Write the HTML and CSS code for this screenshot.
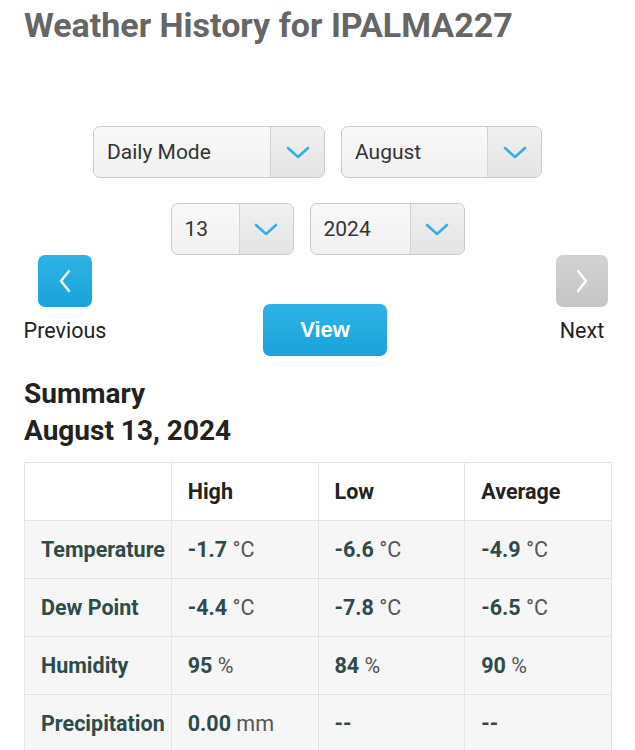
FILE: index.html
```html
<!DOCTYPE html>
<html>
<head>
<meta charset="utf-8">
<link rel="stylesheet" href="styles.css">
</head>
<body>
<h1 class="title">Weather History for IPALMA227</h1>

<div class="selects">
  <div class="sel-row">
    <div class="select">
      <span class="sel-text w-mode">Daily Mode</span>
      <span class="sel-arrow"><svg width="24" height="14" viewBox="0 0 24 14"><polyline points="2,2 12,11 22,2" fill="none" stroke="#3aaee0" stroke-width="2.6" stroke-linecap="round" stroke-linejoin="round"/></svg></span>
    </div>
    <div class="select">
      <span class="sel-text w-month">August</span>
      <span class="sel-arrow"><svg width="24" height="14" viewBox="0 0 24 14"><polyline points="2,2 12,11 22,2" fill="none" stroke="#3aaee0" stroke-width="2.6" stroke-linecap="round" stroke-linejoin="round"/></svg></span>
    </div>
  </div>
  <div class="sel-row">
    <div class="select">
      <span class="sel-text w-day">13</span>
      <span class="sel-arrow"><svg width="24" height="14" viewBox="0 0 24 14"><polyline points="2,2 12,11 22,2" fill="none" stroke="#3aaee0" stroke-width="2.6" stroke-linecap="round" stroke-linejoin="round"/></svg></span>
    </div>
    <div class="select">
      <span class="sel-text w-year">2024</span>
      <span class="sel-arrow"><svg width="24" height="14" viewBox="0 0 24 14"><polyline points="2,2 12,11 22,2" fill="none" stroke="#3aaee0" stroke-width="2.6" stroke-linecap="round" stroke-linejoin="round"/></svg></span>
    </div>
  </div>
</div>

<div class="nav">
  <div class="nav-col prev-col">
    <div class="nav-btn btn-prev"><svg width="12" height="24" viewBox="0 0 12 24"><polyline points="10,2 2,12 10,22" fill="none" stroke="#fff" stroke-width="2.4" stroke-linecap="round" stroke-linejoin="round"/></svg></div>
    <div class="nav-label">Previous</div>
  </div>
  <div class="view-btn">View</div>
  <div class="nav-col next-col">
    <div class="nav-btn btn-next"><svg width="12" height="24" viewBox="0 0 12 24"><polyline points="2,2 10,12 2,22" fill="none" stroke="#fff" stroke-width="2.4" stroke-linecap="round" stroke-linejoin="round"/></svg></div>
    <div class="nav-label">Next</div>
  </div>
</div>

<h2 class="summary">Summary<br>August 13, 2024</h2>

<table class="sum-table">
  <tr class="head">
    <th></th><th>High</th><th>Low</th><th>Average</th>
  </tr>
  <tr>
    <td class="lbl">Temperature</td>
    <td><b>-1.7</b> <span class="u">°C</span></td>
    <td><b>-6.6</b> <span class="u">°C</span></td>
    <td><b>-4.9</b> <span class="u">°C</span></td>
  </tr>
  <tr>
    <td class="lbl">Dew Point</td>
    <td><b>-4.4</b> <span class="u">°C</span></td>
    <td><b>-7.8</b> <span class="u">°C</span></td>
    <td><b>-6.5</b> <span class="u">°C</span></td>
  </tr>
  <tr>
    <td class="lbl">Humidity</td>
    <td><b>95</b> <span class="u">%</span></td>
    <td><b>84</b> <span class="u">%</span></td>
    <td><b>90</b> <span class="u">%</span></td>
  </tr>
  <tr>
    <td class="lbl">Precipitation</td>
    <td><b>0.00</b> <span class="u">mm</span></td>
    <td><b>--</b></td>
    <td><b>--</b></td>
  </tr>
</table>
</body>
</html>
```

FILE: styles.css
```css
html, body {
  margin: 0;
  padding: 0;
  background: #fff;
  font-family: Roboto, "Liberation Sans", sans-serif;
  overflow: hidden;
}

.title {
  margin: 0;
  padding: 5px 24px 0;
  font-size: 34px;
  line-height: 40px;
  font-weight: 700;
  color: #666;
}

.selects {
  margin-top: 81px;
  display: flex;
  flex-direction: column;
  align-items: center;
  gap: 25px;
}

.sel-row {
  display: flex;
  gap: 16px;
}

.select {
  display: flex;
  height: 50px;
  border: 1px solid #c9c9c9;
  border-radius: 7px;
  overflow: hidden;
  background: linear-gradient(#f9f9f9, #f1f1f1);
}

.sel-text {
  display: flex;
  align-items: center;
  padding-left: 13px;
  font-size: 21px;
  color: #333;
  box-sizing: border-box;
}

.w-mode { width: 176px; }
.w-month { width: 145px; }
.w-day { width: 67px; }
.w-year { width: 99px; }

.sel-arrow {
  width: 53px;
  display: flex;
  align-items: center;
  justify-content: center;
  border-left: 1px solid #d4d4d4;
  background: linear-gradient(#f0f0f0, #e4e4e4);
}

.sel-arrow svg { margin-top: 2px; }

.nav {
  display: flex;
  align-items: flex-start;
  padding: 0 27px 0 24px;
  height: 101px;
}

.nav-col {
  display: flex;
  flex-direction: column;
  align-items: center;
}

.prev-col { width: 82px; }
.next-col { width: 52px; margin-left: auto; }

.nav-btn {
  height: 52px;
  border-radius: 7px;
  display: flex;
  align-items: center;
  justify-content: center;
}

.btn-prev {
  width: 54px;
  background: linear-gradient(#2db3e5, #1aa3da);
}

.btn-next {
  width: 52px;
  background: linear-gradient(#d2d2d2, #c6c6c6);
}

.nav-label {
  margin-top: 12px;
  font-size: 21.5px;
  line-height: 24px;
  color: #222;
}

.view-btn {
  margin-top: 49px;
  margin-left: 157px;
  width: 124px;
  height: 52px;
  border-radius: 7px;
  background: linear-gradient(#2db3e5, #1aa3da);
  color: #fff;
  font-family: "Liberation Sans", Arial, sans-serif;
  font-weight: 700;
  font-size: 22px;
  display: flex;
  align-items: center;
  justify-content: center;
}

.summary {
  margin: 19px 0 0;
  padding: 0 24px;
  font-size: 28px;
  line-height: 37px;
  font-weight: 700;
  color: #222;
}

.sum-table {
  margin: 13px 24px 0;
  width: 588px;
  border-collapse: collapse;
  table-layout: fixed;
  font-size: 21.5px;
}

.sum-table th,
.sum-table td {
  height: 58px;
  padding: 0 0 0 16px;
  border: 1px solid #e4e4e4;
  text-align: left;
  vertical-align: middle;
  white-space: nowrap;
  box-sizing: border-box;
}

.sum-table th {
  background: #fff;
  color: #222;
  font-weight: 700;
}

.sum-table td {
  background: #f6f6f6;
  color: #2e4b49;
}

.sum-table td b { font-weight: 700; }

.sum-table td.lbl { font-weight: 700; }

.sum-table .u {
  color: #555;
  font-weight: 400;
}
```
